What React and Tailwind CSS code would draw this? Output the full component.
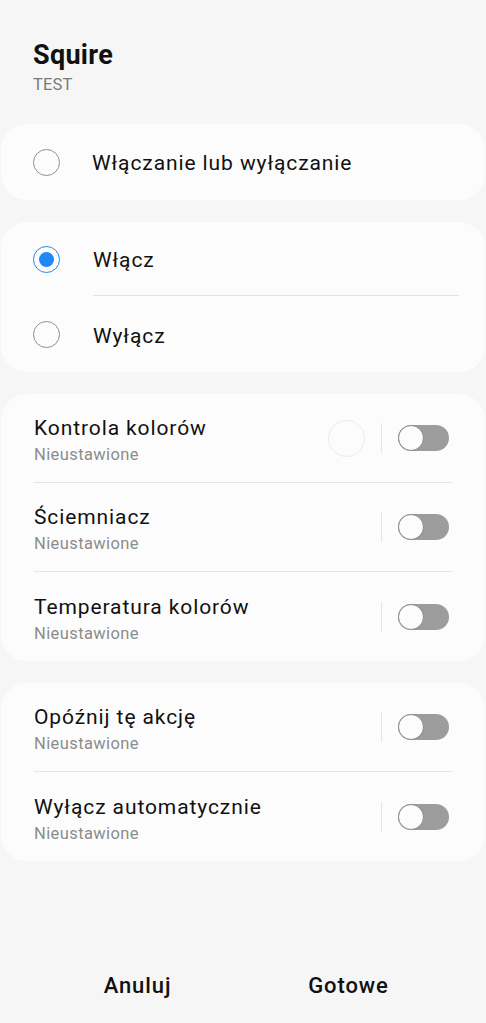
import React, { useState } from 'react';

const Radio = ({ checked }) => (
  <div className={`w-[27px] h-[27px] rounded-full border-[1.5px] flex items-center justify-center ${checked ? 'border-[#1e88f5]' : 'border-[#8f8f8f]'}`}>
    {checked && <div className="w-[15px] h-[15px] rounded-full bg-[#1e88f5]" />}
  </div>
);

const Toggle = () => (
  <div className="relative w-[51px] h-[26px] rounded-full bg-[#9c9c9c]">
    <div className="absolute left-0 top-0 w-[26px] h-[26px] rounded-full bg-[#fcfcfc] border-[1.5px] border-[#8a8a8a]" />
  </div>
);

const SettingRow = ({ title, colorDot, divider }) => (
  <div className={`h-[89px] mx-[33px] flex items-center ${divider ? 'border-b border-[#e4e4e4]' : ''}`}>
    <div className="flex-1 flex flex-col pt-[6px]">
      <span className="text-[21px] leading-[28px] tracking-[0.9px] text-[#111]">{title}</span>
      <span className="text-[16.5px] leading-[26px] tracking-[0.4px] text-[#8c8c8c]">Nieustawione</span>
    </div>
    {colorDot && <div className="w-[37px] h-[37px] rounded-full border border-[#ececec] mr-[16px]" />}
    <div className="w-px h-[30px] bg-[#e6e6e6] mr-[16px]" />
    <div className="mr-[3px]">
      <Toggle />
    </div>
  </div>
);

const App = () => {
  const [choice, setChoice] = useState('on');

  return (
    <div className="min-h-screen w-full bg-[#f6f6f6] flex flex-col font-['Roboto',sans-serif]">
      <div className="px-[33px] pt-[38px]">
        <h1 className="text-[27px] leading-[34px] tracking-[0.3px] font-bold text-[#111]">Squire</h1>
        <p className="text-[16.5px] leading-[26px] tracking-[0.2px] text-[#7a7a7a]">TEST</p>
      </div>

      <div className="mt-[26px] mx-[1px] bg-[#fcfcfc] rounded-[26px] h-[76px] flex items-center px-[32px]">
        <Radio checked={false} />
        <span className="ml-[32px] pt-[4px] text-[21px] tracking-[0.9px] text-[#111]">Włączanie lub wyłączanie</span>
      </div>

      <div className="mt-[22px] mx-[1px] bg-[#fcfcfc] rounded-[26px] flex flex-col">
        <div className="h-[74px] flex items-center pl-[32px]" onClick={() => setChoice('on')}>
          <Radio checked={choice === 'on'} />
          <div className="ml-[33px] flex-1 h-full flex items-center border-b border-[#e2e2e2] mr-[26px] pt-[5px]">
            <span className="text-[21px] tracking-[0.9px] text-[#111]">Włącz</span>
          </div>
        </div>
        <div className="h-[76px] flex items-center pl-[32px]" onClick={() => setChoice('off')}>
          <Radio checked={choice === 'off'} />
          <span className="ml-[33px] pt-[5px] text-[21px] tracking-[0.9px] text-[#111]">Wyłącz</span>
        </div>
      </div>

      <div className="mt-[22px] mx-[1px] bg-[#fcfcfc] rounded-[26px] flex flex-col">
        <SettingRow title="Kontrola kolorów" colorDot divider />
        <SettingRow title="Ściemniacz" divider />
        <SettingRow title="Temperatura kolorów" />
      </div>

      <div className="mt-[22px] mx-[1px] bg-[#fcfcfc] rounded-[26px] flex flex-col">
        <SettingRow title="Opóźnij tę akcję" divider />
        <SettingRow title="Wyłącz automatycznie" />
      </div>

      <div className="flex-1" />

      <div className="flex px-[32px] pb-[13px]">
        <button className="flex-1 h-[50px] text-[22px] tracking-[0.9px] font-medium text-[#111]">Anuluj</button>
        <button className="flex-1 h-[50px] text-[22px] tracking-[0.9px] font-medium text-[#111]">Gotowe</button>
      </div>
    </div>
  );
};

export default App;
